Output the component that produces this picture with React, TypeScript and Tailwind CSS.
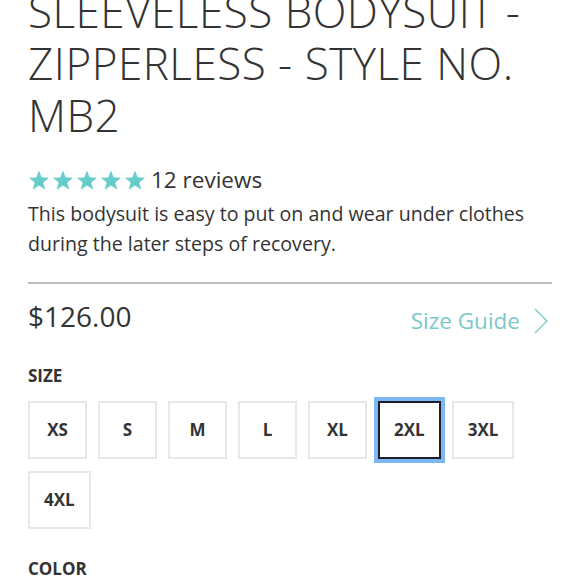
import React from "react";

const Star = () => (
  <svg width="22" height="21" viewBox="0 0 24 23" className="block">
    <polygon
      points="12,0.5 14.9,8.1 23,8.5 16.7,13.6 18.8,21.6 12,17.1 5.2,21.6 7.3,13.6 1,8.5 9.1,8.1"
      fill="#66cccc"
    />
  </svg>
);

const sizes = ["XS", "S", "M", "L", "XL", "2XL", "3XL", "4XL"];

export default function App() {
  return (
    <div
      className="w-[580px] h-[580px] overflow-hidden bg-white text-[#333]"
      style={{ fontFamily: '"Open Sans", sans-serif' }}
    >
      <div className="px-[28px]">
        <h1 className="mt-[-15px] text-[44px] leading-[52px] font-light tracking-[0.5px] text-[#333]">
          SLEEVELESS BODYSUIT - ZIPPERLESS - STYLE NO. MB2
        </h1>
        <div className="mt-[24px] flex items-center">
          <div className="flex gap-[2px]">
            <Star />
            <Star />
            <Star />
            <Star />
            <Star />
          </div>
          <span className="ml-[5px] text-[22.5px] leading-[30px] text-[#333]">12 reviews</span>
        </div>
        <p className="mt-[4px] text-[19.6px] leading-[30px] text-[#333]">
          This bodysuit is easy to put on and wear under clothes during the later steps of recovery.
        </p>
        <div className="mt-[23px] h-[2px] bg-[#bdbdbd]" />
        <div className="mt-[14px] flex items-start justify-between">
          <div className="text-[28px] leading-[36px]">$126.00</div>
          <div className="mt-[8px] flex items-center text-[22.5px] leading-[30px] text-[#7cc8c8]">
            <span>Size Guide</span>
            <svg width="18" height="28" viewBox="0 0 18 28" className="ml-[12px] mr-[2px]">
              <polyline points="3,2 15,14 3,26" fill="none" stroke="#7cc8c8" strokeWidth="1.3" />
            </svg>
          </div>
        </div>
        <div className="mt-[28px] text-[17px] leading-[24px] font-bold">SIZE</div>
        <div className="mt-[13px] flex flex-wrap gap-x-[11px] gap-y-[12px]">
          {sizes.map((s) => {
            const selected = s === "2XL";
            return (
              <div
                key={s}
                className={
                  selected
                    ? "h-[58px] min-w-[59px] px-[14px] flex items-center justify-center border-2 border-[#1c1c2c] outline-4 outline-solid outline-[#7db7f2] text-[17px] font-bold"
                    : "h-[58px] min-w-[59px] px-[14px] flex items-center justify-center border-2 border-[#e8e8e8] text-[17px] font-bold"
                }
              >
                {s}
              </div>
            );
          })}
        </div>
        <div className="mt-[28px] text-[17px] leading-[24px] font-bold">COLOR</div>
      </div>
    </div>
  );
}
